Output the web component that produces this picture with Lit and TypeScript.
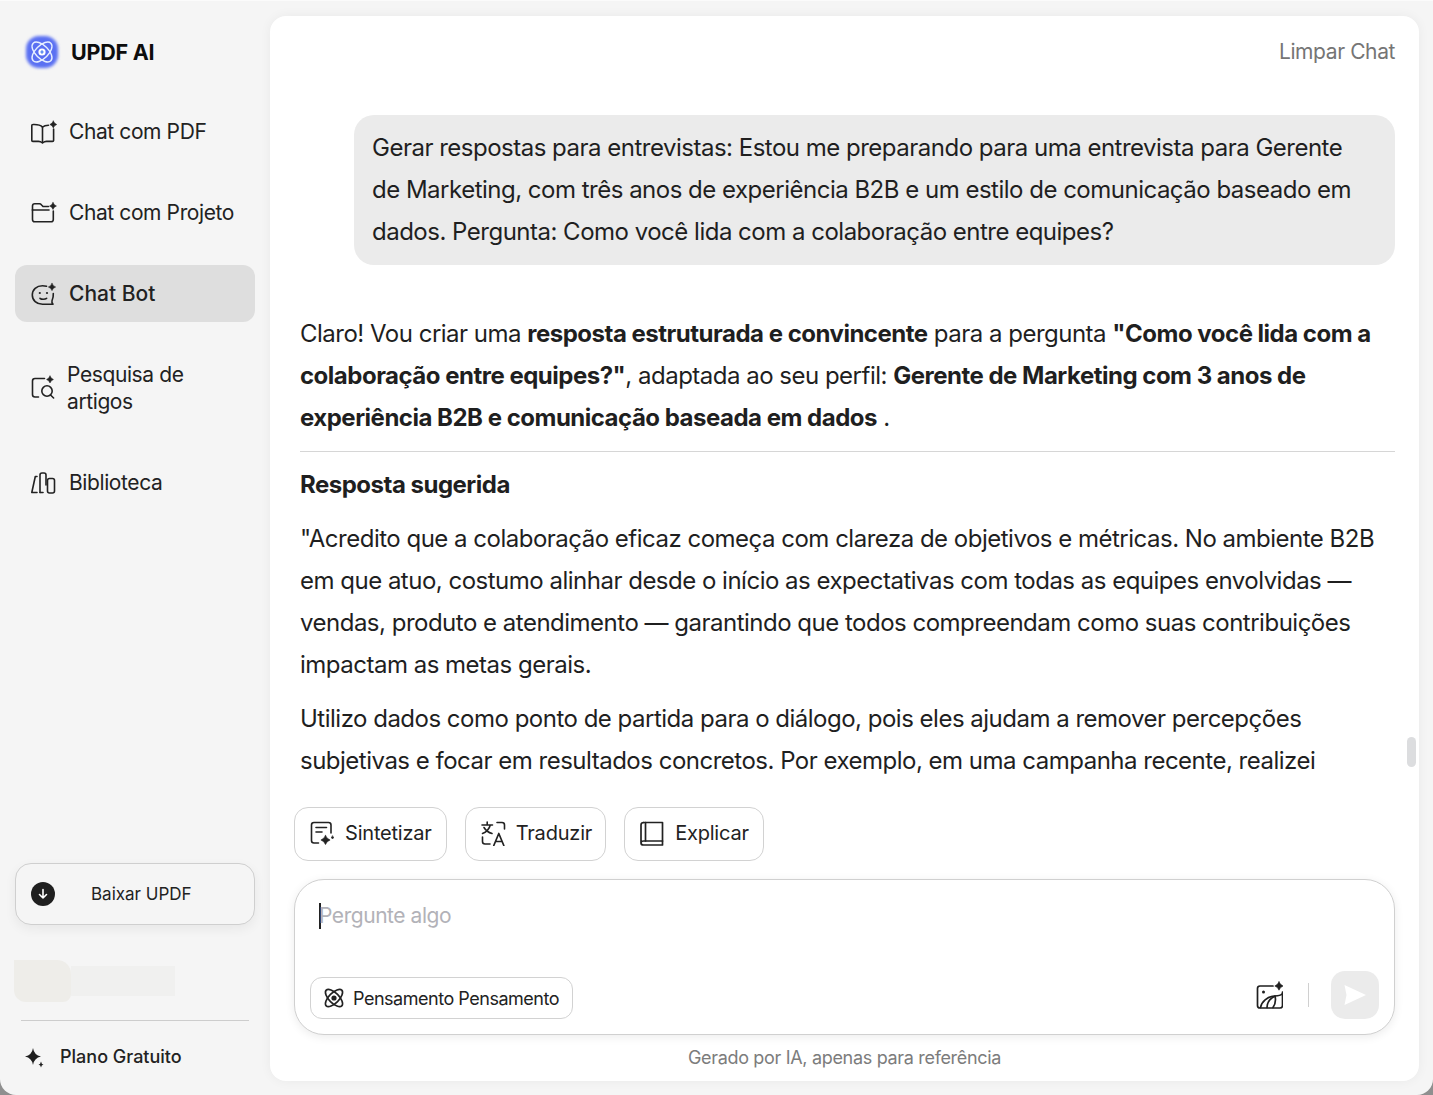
import { LitElement, html, css, svg } from "lit";
import { customElement } from "lit/decorators.js";

const spark = (x: number, y: number, r: number) => svg`<path d="M${x} ${y - r}Q${x + r * 0.25} ${y - r * 0.25} ${x + r} ${y}Q${x + r * 0.25} ${y + r * 0.25} ${x} ${y + r}Q${x - r * 0.25} ${y + r * 0.25} ${x - r} ${y}Q${x - r * 0.25} ${y - r * 0.25} ${x} ${y - r}Z" fill="currentColor" stroke="currentColor" stroke-width=".6"/>`;

const ic = (w: number, body: unknown, sw = 1.6) => html`<svg width=${w} height=${w} viewBox="0 0 ${w} ${w}" fill="none" stroke="currentColor" stroke-width=${sw} stroke-linecap="round" stroke-linejoin="round">${body}</svg>`;

const icons = {
  pdf: ic(28, svg`<path d="M13.5 9C11.5 7 7.5 6.3 3.8 6.5C3 6.5 2.8 7 2.8 7.5V22.5C2.8 23 3.2 23.4 3.8 23.4H9.5C11 23.4 12.3 24 13.5 25C14.7 24 16 23.4 17.5 23.4H23.5C24.2 23.4 24.6 23 24.6 22.5V11"/><path d="M13.5 9V24.5"/><path d="M19.5 7.2C17 7.2 15 7.7 13.5 9"/>${spark(24.3, 6.5, 3.4)}`),
  folder: ic(28, svg`<path d="M3.5 11V7C3.5 5.5 4.3 4.8 5.8 4.8H10.5C11.5 4.8 12 5.3 12.6 6L14 7.5H19.5"/><path d="M3.5 11H20"/><path d="M3.5 11V20.5C3.5 22 4.3 22.8 5.8 22.8H22C23.5 22.8 24.3 22 24.3 20.5V12"/>${spark(24, 7, 3.4)}`),
  bot: ic(28, svg`<path d="M17.5 6.2C16.3 5.9 15 5.7 13.5 5.7C7.5 5.7 3.3 9.8 3.3 15C3.3 20.3 7.5 24.3 13.5 24.3H24C23 23 22.6 22 23 20.8C23.8 19 24.5 17 24.3 13.5"/><circle cx="10.8" cy="13" r="1.1" fill="currentColor" stroke="none"/><circle cx="18" cy="13" r="1.1" fill="currentColor" stroke="none"/><path d="M11 18.3C12.5 19.6 16 19.6 17.6 18.3"/>${spark(23, 7, 3.6)}`),
  search: ic(28, svg`<path d="M15.5 4.5H6C4.5 4.5 3.5 5.5 3.5 7V20.5C3.5 22 4.5 23 6 23H9.5"/>${spark(21, 5.5, 3.4)}<circle cx="18" cy="17" r="5.2"/><path d="M21.8 21.2L24.6 24"/>`),
  library: ic(28, svg`<path d="M8 7.5H6.3L2.8 23.5H8"/><path d="M11 23.5V6C11 4.8 11.7 4 13 4H15C16.3 4 17 4.8 17 6V16"/><path d="M11 23.5H14"/><rect x="18.5" y="9.5" width="7" height="14.5" rx="2"/>`),
  synth: ic(26, svg`<path d="M9.5 23H5C3.4 23 2.5 22 2.5 20.5V5C2.5 3.5 3.4 2.5 5 2.5H19.5C21 2.5 22 3.5 22 5V13"/><path d="M7 7.5H17.5M7 12H13"/>${spark(16.5, 20, 4.6)}${spark(23.5, 17.5, 1.5)}`),
  trans: ic(26, svg`<path d="M2 5H12.5M7.2 2V5M10.3 5C9.3 8.8 6.5 12 2.5 13.5M4 7.5C5.5 10 8.3 12.5 12 13.5"/><path d="M17 2.5H22C23.5 2.5 24.5 3.5 24.5 5V9"/><path d="M2.5 17V21.5C2.5 23 3.5 24 5 24H10"/><path d="M13.8 25.5L18.8 13.5L23.8 25.5M15.5 21.5H22" stroke-width="1.7"/>`),
  book: ic(26, svg`<path d="M4.5 2.5H23.5V21"/><path d="M4.5 2.5C3 2.5 2 3.5 2 5V23C2 24.5 3 25 4.5 25H23.5V21H4.5C3 21 2 21.7 2 23"/><path d="M6.5 2.5V21"/>`, 1.7),
  atom: ic(22, svg`<ellipse cx="11" cy="11" rx="5" ry="11" transform="rotate(45 11 11)" stroke-width="1.7"/><ellipse cx="11" cy="11" rx="5" ry="11" transform="rotate(-45 11 11)" stroke-width="1.7"/><circle cx="11" cy="11" r="2.6" fill="currentColor" stroke="none"/>`),
  image: ic(28, svg`<path d="M18 5H5C3.4 5 2.5 6 2.5 7.5V24.5C2.5 26 3.4 27 5 27H25C26.5 27 27.5 26 27.5 24.5V11"/><circle cx="8.5" cy="11" r="1.5" fill="currentColor" stroke="none"/><path d="M5.5 26.5C6.5 21 12 15.5 20 15C22 14.9 25.5 14.5 27 13"/><path d="M12 26.5C12 22 15 17.5 20 15C21 19 20 23.5 18 26.5"/>${spark(24, 5, 4.2)}`, 1.7),
};

@customElement("app-root")
export class AppRoot extends LitElement {
  static styles = css`
    :host { display: block; width: 1433px; height: 1095px; background: #8f8f8f; font-family: Inter, "Liberation Sans", sans-serif; color: #1f1f1f; overflow: hidden; }
    .win { height: 1095px; box-sizing: border-box; background: #f5f5f5; border-radius: 0 0 16px 16px; display: flex; border-top: 1px solid #fbfbfb; }
    .side { width: 270px; flex: none; box-sizing: border-box; padding: 0 15px; display: flex; flex-direction: column; height: 100%; }
    .brand { display: flex; align-items: center; gap: 11px; padding: 33px 0 0 9px; height: 36px; margin-bottom: 33px; font-size: 21.5px; font-weight: 700; color: #0d0d0d; letter-spacing: -0.25px; }
    .logo { width: 38px; height: 38px; flex: none; margin: 0 -1px; }
    .nav { display: flex; flex-direction: column; gap: 24px; }
    .item { display: flex; align-items: center; gap: 12px; padding: 15px 14px; border-radius: 12px; font-size: 21px; line-height: 27px; color: #222; letter-spacing: -0.4px; }
    .item svg { flex: none; margin: -1px 0; }
    .item.on { background: #dedede; font-weight: 500; letter-spacing: 0; }
    .item.two { gap: 10px; padding-right: 60px; }
    .spacer { flex: 1; }
    .dl { height: 60px; border: 1px solid #cfcfcf; border-radius: 16px; background: #f5f5f5; box-shadow: 0 4px 12px rgba(0,0,0,.06); display: flex; align-items: center; padding-left: 15px; font-size: 17px; color: #222; }
    .dl .round { width: 24px; height: 24px; border-radius: 50%; background: #1f1f1f; color: #fff; display: flex; align-items: center; justify-content: center; margin-right: 36px; }
    .smudge { height: 42px; margin: 35px 0 0 -1px; display: flex; align-items: center; }
    .smudge i { display: block; }
    .smudge .a { width: 57px; height: 42px; background: #eeede9; border-radius: 0 14px 8px 12px; }
    .smudge .b { width: 104px; height: 30px; background: #f0f0ef; }
    .plan-wrap { margin: 18px 6px 3px; border-top: 1px solid #cdcdcd; height: 72px; display: flex; align-items: center; gap: 15px; padding-left: 4px; font-size: 18px; font-weight: 500; color: #222; box-sizing: border-box; }
    .main { position: relative; margin: 15px 0 14px; width: 1149px; flex: none; background: #fff; border-radius: 16px; box-shadow: 0 0 12px rgba(0,0,0,.05); box-sizing: border-box; display: flex; flex-direction: column; padding: 0 24px 0 24px; }
    .clear { height: 72px; flex: none; box-sizing: border-box; padding-top: 21px; text-align: right; font-size: 21px; line-height: 30px; color: #757575; letter-spacing: -0.4px; }
    .scroll { flex: 1; min-height: 0; overflow: hidden; padding-top: 27px; box-sizing: border-box; font-size: 24px; line-height: 42px; letter-spacing: -0.5px; }
    .ask { margin-left: 60px; background: #ebebeb; border-radius: 20px; padding: 12px 24px 12px 18px; }
    .ans { padding-left: 6px; margin-top: 48px; }
    .ans p { margin: 0 0 12px; }
    .ans b { font-weight: 680; }
    .ans hr { border: none; border-top: 1px solid #d6d6d6; margin: 12px 0 12px; }
    .ans h3 { margin: 0 0 12px; font-size: 24px; line-height: 42px; font-weight: 660; }
    .thumb { position: absolute; right: 3px; top: 721px; width: 9px; height: 30px; border-radius: 5px; background: #dcdddf; }
    .actions { display: flex; gap: 18px; height: 54px; flex: none; margin-top: 26px; }
    .act { display: flex; align-items: center; gap: 10px; box-sizing: border-box; height: 54px; padding: 0 14px 2px; border: 1px solid #d2d2d2; border-radius: 14px; font-size: 20px; line-height: 24px; color: #222; letter-spacing: -0.2px; }
    .act.tr { padding-right: 13px; }
    .box { flex: none; margin-top: 18px; height: 156px; box-sizing: border-box; border: 1px solid #d0d0d0; border-radius: 30px; box-shadow: 0 2px 10px rgba(0,0,0,.08); padding: 0 15px; display: flex; flex-direction: column; background: #fff; }
    .ph { height: 91px; padding: 23px 0 0 9px; box-sizing: border-box; font-size: 21px; line-height: 26px; color: #b2b2b8; display: flex; align-items: flex-start; letter-spacing: -0.45px; }
    .caret { width: 2px; height: 26px; background: #222; flex: none; margin-right: -2px; }
    .row { display: flex; align-items: center; gap: 0; height: 48px; }
    .chip { display: flex; align-items: center; gap: 8px; height: 42px; box-sizing: border-box; padding: 0 13px 0 12px; border: 1px solid #d2d2d2; border-radius: 12px; font-size: 18px; letter-spacing: -0.48px; color: #222; margin-top: 6px; }
    .grow { flex: 1; }
    .sep { width: 1px; height: 24px; background: #d0d0d0; margin: 0 22px 0 25px; }
    .send { width: 48px; height: 48px; border-radius: 14px; background: #ebebeb; display: flex; align-items: center; justify-content: center; }
    .foot { flex: none; height: 46px; text-align: center; font-size: 18px; line-height: 46px; color: #7c7c7c; letter-spacing: -0.32px; }
  `;

  render() {
    return html`<div class="win">
      <aside class="side">
        <div class="brand">
          <svg class="logo" viewBox="0 0 38 38" fill="none">
            <defs>
              <linearGradient id="lg" x1="8" y1="4" x2="28" y2="36"><stop offset="0" stop-color="#5a70f2"/><stop offset=".55" stop-color="#3f90f9"/><stop offset="1" stop-color="#5ccdfc"/></linearGradient>
              <filter id="bl" x="-20%" y="-20%" width="140%" height="140%"><feGaussianBlur stdDeviation="1.7"/></filter>
            </defs>
            <rect x="3" y="3" width="32" height="32" rx="13" fill="url(#lg)" filter="url(#bl)"/>
            <g stroke="#e6efff" stroke-width="1.4" fill="none">
              <ellipse cx="19" cy="19" rx="12.5" ry="6.5" transform="rotate(45 19 19)"/>
              <ellipse cx="19" cy="19" rx="12.5" ry="6.5" transform="rotate(-45 19 19)"/>
            </g>
            <circle cx="19" cy="19" r="3.6" fill="#fff"/>
            <path d="M19 17.3v3.4M17.3 19h3.4" stroke="#3f79ee" stroke-width="1.2"/>
          </svg>
          <span>UPDF AI</span>
        </div>
        <nav class="nav">
          <div class="item">${icons.pdf}<span>Chat com PDF</span></div>
          <div class="item">${icons.folder}<span>Chat com Projeto</span></div>
          <div class="item on">${icons.bot}<span>Chat Bot</span></div>
          <div class="item two">${icons.search}<span>Pesquisa de artigos</span></div>
          <div class="item">${icons.library}<span>Biblioteca</span></div>
        </nav>
        <div class="spacer"></div>
        <div class="dl">
          <span class="round"><svg width="14" height="14" viewBox="0 0 14 14" fill="none" stroke="#fff" stroke-width="1.6" stroke-linecap="round" stroke-linejoin="round"><path d="M7 2.5V11M3.5 7.5L7 11L10.5 7.5"/></svg></span>
          <span>Baixar UPDF</span>
        </div>
        <div class="smudge"><i class="a"></i><i class="b"></i></div>
        <div class="plan-wrap">
          <svg width="20" height="22" viewBox="0 0 20 22" fill="#1f1f1f"><path d="M8 2Q9 9 16 10.5Q9 12 8 19Q7 12 0 10.5Q7 9 8 2Z"/><path d="M16 15.5Q16.3 18 18.5 18.5Q16.3 19 16 21.5Q15.7 19 13.5 18.5Q15.7 18 16 15.5Z"/></svg>
          <span>Plano Gratuito</span>
        </div>
      </aside>
      <main class="main">
        <div class="clear">Limpar Chat</div>
        <div class="scroll">
          <div class="ask">Gerar respostas para entrevistas: Estou me preparando para uma entrevista para Gerente de Marketing, com três anos de experiência B2B e um estilo de comunicação baseado em dados. Pergunta: Como você lida com a colaboração entre equipes?</div>
          <div class="ans">
            <p>Claro! Vou criar uma <b>resposta estruturada e convincente</b> para a pergunta <b>"Como você lida com a colaboração entre equipes?"</b>, adaptada ao seu perfil: <b>Gerente de Marketing com 3 anos de experiência B2B e comunicação baseada em dados</b> .</p>
            <hr />
            <h3>Resposta sugerida</h3>
            <p>"Acredito que a colaboração eficaz começa com clareza de objetivos e métricas. No ambiente B2B em que atuo, costumo alinhar desde o início as expectativas com todas as equipes envolvidas — vendas, produto e atendimento — garantindo que todos compreendam como suas contribuições impactam as metas gerais.</p>
            <p>Utilizo dados como ponto de partida para o diálogo, pois eles ajudam a remover percepções subjetivas e focar em resultados concretos. Por exemplo, em uma campanha recente, realizei</p>
          </div>
        </div>
        <div class="thumb"></div>
        <div class="actions">
          <div class="act">${icons.synth}<span>Sintetizar</span></div>
          <div class="act tr">${icons.trans}<span>Traduzir</span></div>
          <div class="act">${icons.book}<span>Explicar</span></div>
        </div>
        <div class="box">
          <div class="ph"><span class="caret"></span><span>Pergunte algo</span></div>
          <div class="row">
            <div class="chip">${icons.atom}<span>Pensamento Pensamento</span></div>
            <div class="grow"></div>
            ${icons.image}
            <div class="sep"></div>
            <div class="send"><svg width="24" height="22" viewBox="0 0 24 22" fill="#fff"><path d="M1.5 1L23 11L1.5 21L3.5 11Z"/></svg></div>
          </div>
        </div>
        <div class="foot">Gerado por IA, apenas para referência</div>
      </main>
    </div>`;
  }
}
